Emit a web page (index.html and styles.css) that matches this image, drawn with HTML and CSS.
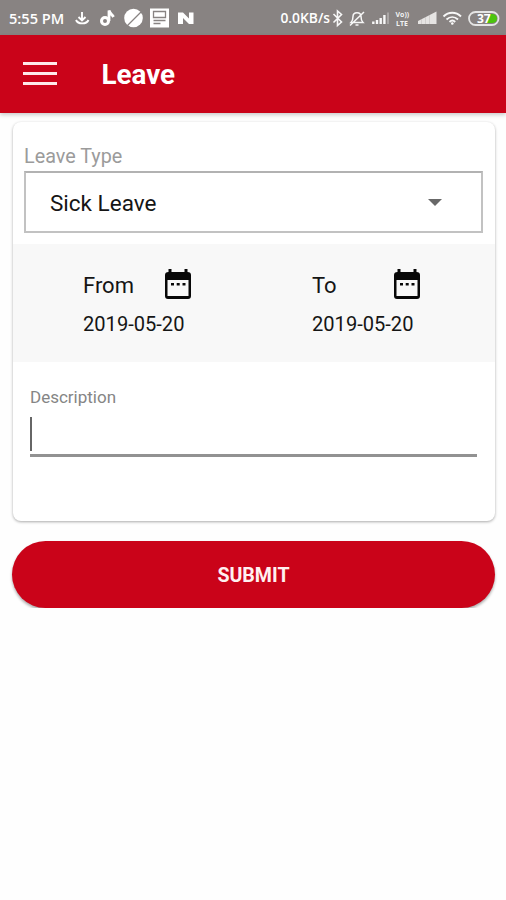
FILE: index.html
```html
<!DOCTYPE html>
<html lang="en">
<head>
<meta charset="utf-8">
<title>Leave</title>
<link rel="stylesheet" href="styles.css">
</head>
<body>
<div class="status">
  <span class="clock">5:55 PM</span>
  <svg class="notifications" width="122" height="24" viewBox="74 5 122 24" fill="none" stroke="#fff">
    <path d="M82 11v8M78.500 16l3.500 3.500 3.500-3.500M76 19c2 4.500 10.500 4.500 12.500 0" stroke-width="1.900"/>
    <circle cx="105" cy="20" r="3.500" stroke-width="3"/>
    <path d="M109 20V9.500c1 3.500 3 3.500 4.500 6.500" stroke-width="2.800"/>
    <circle cx="133.500" cy="17" r="9.300" fill="#fff" stroke="none"/>
    <path d="M127 25l15-15" stroke="#888382" stroke-width="1.300"/>
    <path d="M150 7.500h19v19h-19z" fill="#fff" stroke="none"/>
    <path d="M153.500 10.500h12v6h-12zM153.500 19.500h12M153.500 22.500h7" stroke="#888382" stroke-width="1.300"/>
    <path d="M178 11.500h5l6 6v-6h4.500V23h-4.500l-6-6v6h-5z" fill="#fff" stroke="none"/>
  </svg>
  <span class="speed">0.0KB/s</span>
  <svg class="system" width="170" height="26" viewBox="331 4 170 26" fill="none" stroke="#f7f7f7">
    <path d="M333.500 13l8 8-4 3.500V10l4 3.500-8 8" stroke-width="1.600"/>
    <path d="M351 21.500h12c-2-2-2-3-2-6 0-5-8-5-8 0 0 3 0 4-2 6zM355.500 24h3M350 24.500L364 11" stroke-width="1.500"/>
    <path d="M373.300 23v-2.500M377 23v-4M380.700 23v-6M384.400 23v-9" stroke-width="2.400"/>
    <path d="M388 23V11.500" stroke="#aaa6a5" stroke-width="2"/>
    <g class="volte"><text x="395.500" y="15.500">Vo))</text><text x="396" y="24.500">LTE</text></g>
    <path d="M418 23v-3l18.500-9.500V23z" fill="#e6e4e3" stroke="none"/>
    <path d="M421.500 23v-5M425.500 23v-7M429.500 23v-9" stroke="#c4c1c0" stroke-width=".6"/>
    <path d="M443.500 15.500c5-5 12.500-5 17.500 0M446.500 18.500c3.500-3.200 8-3.200 11.500 0M449.500 21c1.700-1.700 4-1.700 5.700 0" stroke-width="1.900"/>
    <circle cx="452.300" cy="22.500" r="1.300" fill="#fff" stroke="none"/>
    <path d="M490.500 13h2q4.500 .500 4.500 4.500t-4.500 4.500h-6z" fill="#4bc40e" stroke="none"/>
    <rect x="469" y="11" width="29.500" height="13" rx="6.500" stroke="#e5e5e5" stroke-width="1.800"/>
    <text class="charge" x="477" y="21.500">37</text>
  </svg>
</div>
<header class="appbar">
  <div class="menu"><i></i><i></i><i></i></div>
  <h1>Leave</h1>
</header>
<main>
  <section class="card">
    <div class="type">
      <label>Leave Type</label>
      <div class="select"><span>Sick Leave</span><b class="arrow"></b></div>
    </div>
    <div class="dates">
      <div class="date">
        <div class="heading"><span>From</span>
          <svg width="28" height="31" viewBox="0 0 28 31"><path fill="#080808" fill-rule="evenodd" d="M4.500 0h3v3h13V0h3v3q3.500 0 3.500 3v21q0 3-3 3H4q-3 0-3-3V6q0-3 3.500-3zM3.500 11v16h21V11zM7 14h3v2.500H7zM12.700 14h3v2.500h-3zM18.500 14h3v2.500h-3z"/></svg>
        </div>
        <span class="value">2019-05-20</span>
      </div>
      <div class="date">
        <div class="heading"><span>To</span>
          <svg width="28" height="31" viewBox="0 0 28 31"><path fill="#080808" fill-rule="evenodd" d="M4.500 0h3v3h13V0h3v3q3.500 0 3.500 3v21q0 3-3 3H4q-3 0-3-3V6q0-3 3.500-3zM3.500 11v16h21V11zM7 14h3v2.500H7zM12.700 14h3v2.500h-3zM18.500 14h3v2.500h-3z"/></svg>
        </div>
        <span class="value">2019-05-20</span>
      </div>
    </div>
    <div class="description">
      <label>Description</label>
      <div class="field"><i class="caret"></i></div>
    </div>
  </section>
  <button class="submit">SUBMIT</button>
</main>
</body>
</html>
```
FILE: styles.css
```css
* { box-sizing: border-box; }
body { margin: 0; background: #fefefe; font-family: Roboto, sans-serif; color: #151515; }
.status { height: 35px; background: #888382; display: flex; align-items: center; padding: 0 5px 0 9px; color: #fff; font: 600 14.600px/34px "Open Sans", sans-serif; white-space: nowrap; }
.clock { width: 65px; }
.notifications, .system { flex: none; }
.speed { margin: 0 1px 0 auto; font-size: 13.800px; }
.volte text { font: 700 7px "Open Sans", sans-serif; fill: #f2f2f2; stroke: none; }
.charge { font: 700 12px "Open Sans", sans-serif; fill: #fff; stroke: none; }
.appbar { height: 78px; background: #ca0319; display: flex; align-items: center; padding-left: 23px; box-shadow: 0 2px 4px #0003; }
.menu { width: 34px; height: 23px; margin-top: -1px; display: flex; flex-direction: column; justify-content: space-between; }
.menu i { height: 3px; background: #ffe8e8; }
h1 { margin: 1px 0 0 44.500px; color: #fff; font-size: 27.800px; font-weight: 700; line-height: 36px; }
main { padding: 9px 11px 0 12px; }
.card { height: 399px; margin: 0 0 0 1px; background: #fff; border-radius: 8px; box-shadow: 0 1px 3px #0005; }
.type { height: 122px; padding: 23px 12px 0 11px; }
.type label { display: block; height: 26px; color: #9b9b9b; font-size: 19.800px; line-height: 24px; }
.select { height: 62px; border: 2px solid #c2c2c2; border-top-color: #b2b2b2; display: flex; align-items: center; justify-content: space-between; padding: 1px 39px 0 24px; font-size: 22.500px; }
.arrow { border: 7px solid transparent; border-top-color: #686868; border-bottom: 0; }
.dates { height: 118px; background: #f8f8f8; display: grid; grid-template-columns: 229px 1fr; padding: 25px 0 0 70px; }
.heading { width: 109px; height: 31px; display: flex; justify-content: space-between; align-items: center; font-size: 22px; }
.heading span { padding-top: 2px; }
.value { display: block; margin-top: 12px; font-size: 20.100px; line-height: 24px; }
.description { padding: 25px 18px 0 17px; }
.description label { display: block; color: #858585; font-size: 17px; line-height: 20px; }
.field { height: 50px; border-bottom: 3px solid #929292; padding-top: 10px; }
.caret { display: block; width: 2px; height: 34px; background: #666; }
.submit { display: block; width: 483px; height: 67px; margin-top: 20px; padding: 2px 0 0; border: 0; border-radius: 34px; background: #ca0319; box-shadow: 0 2px 3px #0005; color: #fff0f0; font: 700 19.600px Roboto, sans-serif; }
```
